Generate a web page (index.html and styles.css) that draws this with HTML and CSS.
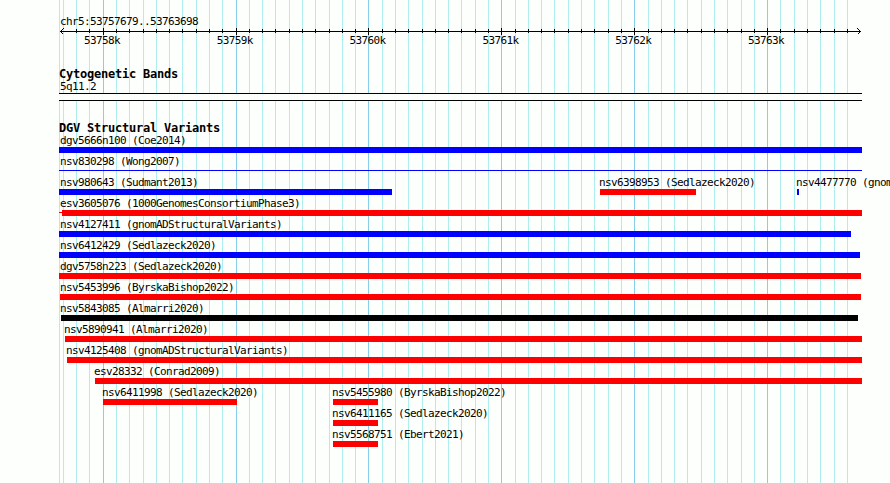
FILE: index.html
```html
<!DOCTYPE html>
<html lang="en">
<head>
<meta charset="utf-8">
<title>chr5:53757679..53763698</title>
<link rel="stylesheet" href="styles.css">
</head>
<body>
<main class="browser">
  <svg class="grid" width="890" height="483" aria-hidden="true" shape-rendering="crispEdges">
    <path class="minor" d="M59.5 0v483M63.5 0v483M76.5 0v483M89.5 0v483M116.5 0v483M129.5 0v483M143.5 0v483M156.5 0v483M169.5 0v483M182.5 0v483M196.5 0v483M209.5 0v483M222.5 0v483M249.5 0v483M262.5 0v483M275.5 0v483M289.5 0v483M302.5 0v483M315.5 0v483M329.5 0v483M342.5 0v483M355.5 0v483M382.5 0v483M395.5 0v483M408.5 0v483M422.5 0v483M435.5 0v483M448.5 0v483M461.5 0v483M475.5 0v483M488.5 0v483M515.5 0v483M528.5 0v483M541.5 0v483M554.5 0v483M568.5 0v483M581.5 0v483M594.5 0v483M608.5 0v483M621.5 0v483M648.5 0v483M661.5 0v483M674.5 0v483M687.5 0v483M701.5 0v483M714.5 0v483M727.5 0v483M741.5 0v483M754.5 0v483M780.5 0v483M794.5 0v483M807.5 0v483M820.5 0v483M834.5 0v483M847.5 0v483"/>
    <path class="major" d="M103.5 0v483M236.5 0v483M368.5 0v483M501.5 0v483M634.5 0v483M767.5 0v483"/>
  </svg>

  <header class="region">chr5:53757679..53763698</header>
  <svg class="axis" width="890" height="8" aria-hidden="true" shape-rendering="crispEdges">
    <path d="M60 3.5H861M103.5 0v7M236.5 0v7M368.5 0v7M501.5 0v7M634.5 0v7M767.5 0v7"/>
    <path d="M76.5 1v4M89.5 1v4M116.5 1v4M129.5 1v4M143.5 1v4M156.5 1v4M169.5 1v4M182.5 1v4M196.5 1v4M209.5 1v4M222.5 1v4M249.5 1v4M262.5 1v4M275.5 1v4M289.5 1v4M302.5 1v4M315.5 1v4M329.5 1v4M342.5 1v4M355.5 1v4M382.5 1v4M395.5 1v4M408.5 1v4M422.5 1v4M435.5 1v4M448.5 1v4M461.5 1v4M475.5 1v4M488.5 1v4M515.5 1v4M528.5 1v4M541.5 1v4M554.5 1v4M568.5 1v4M581.5 1v4M594.5 1v4M608.5 1v4M621.5 1v4M648.5 1v4M661.5 1v4M674.5 1v4M687.5 1v4M701.5 1v4M714.5 1v4M727.5 1v4M741.5 1v4M754.5 1v4M780.5 1v4M794.5 1v4M807.5 1v4M820.5 1v4M834.5 1v4M847.5 1v4"/>
    <path d="M63.5 0.5L60.5 3.5L63.5 6.5M857.5 0.5L860.5 3.5L857.5 6.5"/>
  </svg>
  <div class="ticks">
    <span>53758k</span><span>53759k</span><span>53760k</span><span>53761k</span><span>53762k</span><span>53763k</span>
  </div>

  <section class="cyto">
    <h2>Cytogenetic Bands</h2>
    <p class="band-name">5q11.2</p>
    <div class="band"></div>
  </section>

  <section class="variants">
    <h2>DGV Structural Variants</h2>
    <div class="row"><div class="feature gain edge" style="margin-left:59px;width:803px"><span>dgv5666n100 (Coe2014)</span><i></i></div></div>
    <div class="row"><div class="feature gain edge thin" style="margin-left:59px;width:803px"><span>nsv830298 (Wong2007)</span><i></i></div></div>
    <div class="row">
      <div class="feature gain edge" style="margin-left:59px;width:333px"><span>nsv980643 (Sudmant2013)</span><i></i></div>
      <div class="feature loss" style="margin-left:208px;width:96px"><span>nsv6398953 (Sedlazeck2020)</span><i></i></div>
      <div class="feature gain" style="margin-left:101px;width:2px"><span>nsv4477770 (gnom</span><i></i></div>
    </div>
    <div class="row"><div class="feature loss edge lead" style="margin-left:59px;width:803px"><span>esv3605076 (1000GenomesConsortiumPhase3)</span><i></i></div></div>
    <div class="row"><div class="feature gain edge" style="margin-left:59px;width:792px"><span>nsv4127411 (gnomADStructuralVariants)</span><i></i></div></div>
    <div class="row"><div class="feature gain edge" style="margin-left:59px;width:801px"><span>nsv6412429 (Sedlazeck2020)</span><i></i></div></div>
    <div class="row"><div class="feature loss edge" style="margin-left:59px;width:802px"><span>dgv5758n223 (Sedlazeck2020)</span><i></i></div></div>
    <div class="row"><div class="feature loss near" style="margin-left:60px;width:801px"><span>nsv5453996 (ByrskaBishop2022)</span><i></i></div></div>
    <div class="row"><div class="feature other" style="margin-left:61px;width:797px"><span>nsv5843085 (Almarri2020)</span><i></i></div></div>
    <div class="row"><div class="feature loss" style="margin-left:65px;width:797px"><span>nsv5890941 (Almarri2020)</span><i></i></div></div>
    <div class="row"><div class="feature loss" style="margin-left:67px;width:795px"><span>nsv4125408 (gnomADStructuralVariants)</span><i></i></div></div>
    <div class="row"><div class="feature loss" style="margin-left:95px;width:767px"><span>esv28332 (Conrad2009)</span><i></i></div></div>
    <div class="row">
      <div class="feature loss" style="margin-left:103px;width:134px"><span>nsv6411998 (Sedlazeck2020)</span><i></i></div>
      <div class="feature loss" style="margin-left:96px;width:45px"><span>nsv5455980 (ByrskaBishop2022)</span><i></i></div>
    </div>
    <div class="row"><div class="feature loss" style="margin-left:333px;width:45px"><span>nsv6411165 (Sedlazeck2020)</span><i></i></div></div>
    <div class="row"><div class="feature loss" style="margin-left:333px;width:45px"><span>nsv5568751 (Ebert2021)</span><i></i></div></div>
  </section>
</main>
</body>
</html>
```
FILE: styles.css
```css
* { box-sizing: border-box; }

body {
  margin: 0;
  background: #fdfffc;
  color: #000;
  font: 11px/12px "DejaVu Sans Mono", monospace;
  letter-spacing: -0.622px;
}

.browser {
  position: relative;
  width: 890px;
  height: 483px;
  overflow: hidden;
  padding-top: 16px;
  isolation: isolate;
}

.grid {
  position: absolute;
  top: 0;
  left: 0;
  z-index: -1;
}

.grid path, .axis path { fill: none; stroke-width: 1; }
.minor { stroke: #afeeee; }
.major { stroke: #87ceeb; }

.region { height: 12px; padding-left: 60px; }

.axis { display: block; }
.axis path { stroke: #000; }

.ticks {
  display: grid;
  grid-template-columns: repeat(6, 132.8px);
  height: 12px;
  margin-top: -1px;
  padding-left: 84px;
}

h2 {
  margin: 0;
  height: 13px;
  padding-left: 59px;
  font-size: 12px;
  line-height: 13px;
  font-weight: bold;
  letter-spacing: -0.224px;
}

.cyto { padding-top: 21px; }

.band-name { margin: 0; height: 12px; padding-left: 60px; }

.band {
  width: 803px;
  height: 8px;
  margin-left: 59px;
  border: solid #000;
  border-width: 1px 0;
  background: #fdfffc;
}

.variants { padding-top: 21px; }

.row { display: flex; height: 21px; }

.feature { flex: none; }

.feature span {
  display: block;
  width: 0;
  height: 12px;
  margin-left: -1px;
  white-space: nowrap;
}

.feature.edge span { margin-left: 1px; }
.feature.near span { margin-left: 0; }

.feature i { display: block; height: 6px; background: currentColor; }
.gain i { color: #00f; }
.loss i { color: #f00; }
.other i { color: #000; }

.thin i { height: 1px; margin-top: 2px; }

.lead i {
  background:
    linear-gradient(#f00, #f00) 3px 0 / 800px 6px no-repeat,
    linear-gradient(#f00, #f00) 0 2px / 3px 1px no-repeat;
}
```
